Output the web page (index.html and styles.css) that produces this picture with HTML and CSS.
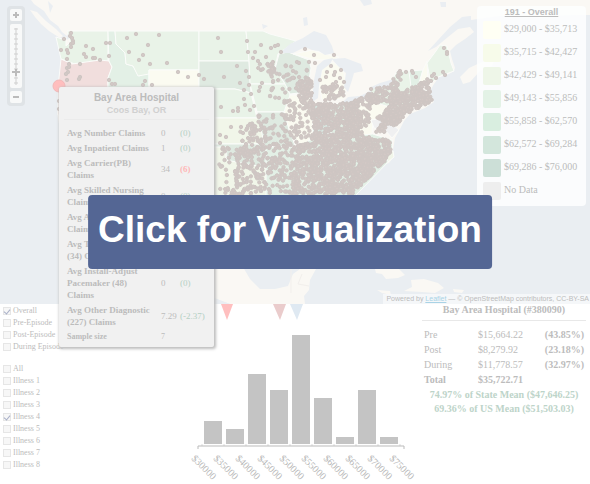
FILE: index.html
```html
<!DOCTYPE html>
<html lang="en">
<head>
<meta charset="utf-8">
<title>Hospital Claims Visualization</title>
<link rel="stylesheet" href="styles.css">
</head>
<body>
<main class="page">
  <section class="map" aria-label="Map">
    <svg class="map-canvas" viewBox="0 0 590 304" preserveAspectRatio="xMinYMin slice" aria-hidden="true">
      <rect class="sea" width="590" height="304"/>
      <path class="land" d="M31 0 34 4 44 11 50 20 58 26 62 32 67 36 68 31 71 38 66 40 55 37 60 42 61 60 59 87 57 113 62 140 75 200 100 230 140 290 200 304 214 298 230 304 590 304 590 0Z"/>
      <path class="land" d="M30 10 37 12 46 21 56 29 63 36 60 38 49 31 41 24 35 17Z"/>
      <path class="sea" d="M590 15 470 16 462 17 450 27 438 40 428 51 436 47 448 37 458 29 470 27 474 32 465 39 456 45 450 51 452 59 455 68 454 71 447 75 439 77 434 84 430 91 430 98 434 102 425 108 410 114 404 121 400 129 395 138 393 150 394 156 389 163 378 167 370 176 362 186 355 197 340 215 345 260 330 250 320 225 290 222 250 230 240 262 250 279 260 289 275 289 288 286 293 274 300 269 316 269 310 280 309 290 304 296 305 304 590 304Z"/>
      <path class="land" d="M460 77 469 68 482 62 496 57 492 66 480 71 470 82 463 84ZM471 20 500 16 540 18 590 12 590 0 471 0ZM375 269 398 268 405 275 398 278 386 279 382 274 376 273ZM411 280 424 279 438 283 444 288 435 293 422 292 404 291 412 287ZM377 290 390 291 391 295 382 293ZM453 289 464 290 462 293 454 292Z"/>
      <path class="sea" d="M48 1 50 13 53 6ZM303 18 307 17 308 25 304 26ZM360 0 371 0 372 4 364 6ZM440 2 446 2 446 7 441 7ZM262 24 268 26 263 29Z"/>
      <path class="sea" d="M214 298 230 304 214 304Z"/>

      <g class="states">
        <path class="tone-3" d="M56 37 62 39 66 37 66 46 70 42 67 31 108 31 108 61 85 63 75 64 61 59Z"/>
        <path class="oregon" d="M61 59 72 64 100 60 109 61 112 67 108 78 108 115 58 115 58 87Z"/>
        <path class="tone-4" d="M108 31 115 31 116 44 125 53 126 64 133 66 139 76 149 72 149 115 108 115 108 78 112 67 109 61Z"/>
        <path class="tone-3" d="M115 31 199 31 199 70 149 70 149 74 138 76 133 66 126 64 125 53 116 44Z"/>
        <path class="tone-1" d="M149 70 199 70 199 110 149 110Z"/>
        <path class="tone-3" d="M199 31 246 31 249 61 199 61Z"/>
        <path class="tone-6" d="M199 61 249 61 251 93 235 89 199 89Z"/>
        <path class="tone-3" d="M199 89 235 89 251 93 257 118 199 118Z"/>
        <path class="tone-2" d="M199 118 260 118 266 144 199 144Z"/>
        <path class="tone-6" d="M211 144 268 144 268 168 250 168 226 160 226 148 211 148Z"/>
        <path class="tone-2" d="M211 147 226 147 226 160 268 168 270 200 211 200Z"/>
        <path class="tone-3" d="M246 31 263 31 270 34 296 41 278 54 275 68 285 84 250 84 249 60Z"/>
        <path class="tone-3" d="M250 84 286 84 291 98 285 112 257 112Z"/>
        <path class="tone-6" d="M279 54 288 52 309 60 311 68 307 92 290 94 284 82 275 69Z"/>
        <path class="tone-6" d="M257 112 284 112 295 146 265 147Z"/>
        <path class="tone-1" d="M290 95 309 95 313 106 313 135 303 147 290 133 284 112Z"/>
        <path class="tone-1" d="M293 54 312 50 325 54 339 57 334 60 316 60 304 57ZM323 66 333 62 343 69 347 86 344 99 322 100 319 84Z"/>
        <path class="tone-5" d="M313 105 330 103 330 133 313 140Z"/>
        <path class="tone-4" d="M330 104 360 102 360 135 330 133Z"/>
        <path class="tone-4" d="M266 147 300 147 313 138 360 130 392 140 393 157 355 196 266 200Z"/>
        <path class="tone-1" d="M359 103 382 94 396 112 373 121 372 134 353 136Z"/>
        <path class="tone-3" d="M370 89 390 83 397 71 420 71 424 98 400 110 373 102Z"/>
        <path class="tone-4" d="M409 71 423 70 418 86 411 87Z"/>
        <path class="tone-1" d="M423 70 427 61 428 84 418 88Z"/>
        <path class="tone-3" d="M427 63 436 51 440 45 447 46 451 63 454 71 438 77 431 84Z"/>
        <path class="nodata" d="M371 120 385 118 399 130 392 138 385 130 374 128Z"/>
        <path class="tone-2" d="M386 152 393 151 394 157 388 162Z"/>
      </g>
      <g class="lakes">
        <path d="M280 53 290 44 303 38 314 31 326 35 332 46 334 53 325 55 319 51 312 50 305 47 293 53 286 53Z"/>
        <path d="M312 102 314 80 317 66 324 60 333 58 330 64 322 70 319 86 318 98Z"/>
        <path d="M332 59 345 58 361 64 363 71 354 73 352 80 348 92 344 87 346 73 338 66Z"/>
        <path d="M342 103 348 97 360 96 372 90 368 97 352 104ZM369 88 380 83 394 79 391 85 378 89Z"/>
      </g>
      <g class="border"><path d="M291 269 291 293M302 274 298 284 309 286"/></g>
      <g id="hospitals" class="hospitals"></g>
      <circle class="selected" cx="59" cy="86" r="6"/>
    </svg>

    <div class="zoom-control">
      <button class="zoom-button" type="button" aria-label="Zoom in"><svg viewBox="0 0 12 12" aria-hidden="true"><path d="M6 3v6M3 6h6"/></svg></button>
      <svg class="zoom-scale" viewBox="0 0 12 64" aria-hidden="true">
        <path class="ticks" d="M6 4v57M4 5h4M4 10h4M4 15h4M4 20h4M4 25h4M4 30h4M4 35h4M4 40h4M4 45h4M4 54h4M4 59h4"/>
        <path class="knob" d="M2 48h8M6 45v7"/>
      </svg>
      <button class="zoom-button" type="button" aria-label="Zoom out"><svg viewBox="0 0 12 12" aria-hidden="true"><path d="M3 6h6"/></svg></button>
    </div>

    <aside class="legend">
      <h2 class="legend-title">191 - Overall</h2>
      <ul class="legend-list">
        <li><span class="swatch swatch-1"></span>$29,000 - $35,713</li>
        <li><span class="swatch swatch-2"></span>$35,715 - $42,427</li>
        <li><span class="swatch swatch-3"></span>$42,429 - $49,141</li>
        <li><span class="swatch swatch-4"></span>$49,143 - $55,856</li>
        <li><span class="swatch swatch-5"></span>$55,858 - $62,570</li>
        <li><span class="swatch swatch-6"></span>$62,572 - $69,284</li>
        <li><span class="swatch swatch-7"></span>$69,286 - $76,000</li>
        <li><span class="swatch swatch-none"></span>No Data</li>
      </ul>
    </aside>
    <p class="attribution">Powered by <a href="#leaflet">Leaflet</a> — © OpenStreetMap contributors, CC-BY-SA</p>
  </section>

  <section class="details">
    <form class="filters">
      <fieldset>
        <label><input type="checkbox" checked>Overall</label>
        <label><input type="checkbox">Pre-Episode</label>
        <label><input type="checkbox">Post-Episode</label>
        <label><input type="checkbox">During Episode</label>
      </fieldset>
      <fieldset>
        <label><input type="checkbox">All</label>
        <label><input type="checkbox">Illness 1</label>
        <label><input type="checkbox">Illness 2</label>
        <label><input type="checkbox">Illness 3</label>
        <label><input type="checkbox" checked>Illness 4</label>
        <label><input type="checkbox">Illness 5</label>
        <label><input type="checkbox">Illness 6</label>
        <label><input type="checkbox">Illness 7</label>
        <label><input type="checkbox">Illness 8</label>
      </fieldset>
    </form>

    <svg class="chart" viewBox="0 0 232 180" role="img" aria-label="Cost distribution">
      <path class="marker-hospital" d="M31 0h12l-6 16z"/>
      <path class="marker-state" d="M83 0h13l-6 16z"/>
      <path class="marker-us" d="M100 0h13l-6 16z"/>
      <g class="bars">
        <rect x="14" y="117" width="18" height="23"/>
        <rect x="36" y="125" width="18" height="15"/>
        <rect x="58" y="70" width="18" height="70"/>
        <rect x="80" y="86" width="18" height="54"/>
        <rect x="102" y="31" width="18" height="109"/>
        <rect x="124" y="94" width="18" height="46"/>
        <rect x="146" y="133" width="18" height="7"/>
        <rect x="168" y="86" width="18" height="54"/>
        <rect x="190" y="133" width="18" height="7"/>
      </g>
      <path class="minor-ticks" d="M12 140v2M34 140v2M56 140v2M78 140v2M100 140v2M122 140v2M144 140v2M166 140v2M188 140v2M210 140v2"/>
      <path class="axis" d="M8 145v-3h206v3"/>
      <g class="axis-labels">
        <text transform="translate(1 155) rotate(45)">$30000</text>
        <text transform="translate(23 155) rotate(45)">$35000</text>
        <text transform="translate(45 155) rotate(45)">$40000</text>
        <text transform="translate(67 155) rotate(45)">$45000</text>
        <text transform="translate(89 155) rotate(45)">$50000</text>
        <text transform="translate(111 155) rotate(45)">$55000</text>
        <text transform="translate(133 155) rotate(45)">$60000</text>
        <text transform="translate(155 155) rotate(45)">$65000</text>
        <text transform="translate(177 155) rotate(45)">$70000</text>
        <text transform="translate(199 155) rotate(45)">$75000</text>
      </g>
    </svg>

    <section class="summary">
      <h2>Bay Area Hospital (#380090)</h2>
      <table>
        <tr><th scope="row">Pre</th><td>$15,664.22</td><td class="share">(43.85%)</td></tr>
        <tr><th scope="row">Post</th><td>$8,279.92</td><td class="share">(23.18%)</td></tr>
        <tr><th scope="row">During</th><td>$11,778.57</td><td class="share">(32.97%)</td></tr>
        <tr class="total"><th scope="row">Total</th><td>$35,722.71</td><td></td></tr>
      </table>
      <p>74.97% of State Mean ($47,646.25)</p>
      <p>69.36% of US Mean ($51,503.03)</p>
    </section>
  </section>

  <aside class="popup">
    <header>
      <h2>Bay Area Hospital</h2>
      <p>Coos Bay, OR</p>
    </header>
    <table>
      <tr><th scope="row">Avg Number Claims</th><td>0</td><td class="good">(0)</td></tr>
      <tr><th scope="row">Avg Inpatient Claims</th><td>1</td><td class="good">(0)</td></tr>
      <tr><th scope="row">Avg Carrier(PB) Claims</th><td>34</td><td class="bad">(6)</td></tr>
      <tr><th scope="row">Avg Skilled Nursing Claims</th><td>0</td><td class="good">(0)</td></tr>
      <tr><th scope="row">Avg A<br>Claims</th><td></td><td></td></tr>
      <tr><th scope="row">Avg T<br>(34) Claims</th><td></td><td></td></tr>
      <tr><th scope="row">Avg Install-Adjust Pacemaker (48)<br>Claims</th><td>0</td><td class="good">(0)</td></tr>
      <tr><th scope="row">Avg Other Diagnostic (227) Claims</th><td>7.29</td><td class="good">(-2.37)</td></tr>
      <tr class="sample"><th scope="row">Sample size</th><td>7</td><td></td></tr>
    </table>
  </aside>

  <button class="launch" type="button">Click for Visualization</button>
</main>
<script src="map.js"></script>
</body>
</html>
```
FILE: styles.css
```css
* { box-sizing: border-box; }

body {
  margin: 0;
  background: #fff;
  color: #bcbcbc;
  font-family: "Liberation Serif", "Times New Roman", serif;
  font-size: 10px;
  line-height: 12px;
}

h2, p, ul, fieldset { margin: 0; padding: 0; border: 0; }
h2 { font-size: inherit; }

.page { position: relative; min-height: 100vh; overflow: hidden; }

/* Map */
.map { position: relative; height: 304px; overflow: hidden; background: #ebeff2; }
.map-canvas { display: block; width: 100%; height: 100%; }
.sea, .lakes path { fill: #eaeef2; }
.land { fill: #faf8f4; }
.states path { stroke: #fbfcfa; stroke-width: 1; }
.states .tone-1 { fill: #fbfbf1; }
.states .tone-2 { fill: #f1f6e9; }
.states .tone-3 { fill: #e9f3e8; }
.states .tone-4 { fill: #e3f0e6; }
.states .tone-5 { fill: #d9e8e2; }
.states .tone-6 { fill: #dfeae1; }
.states .nodata { fill: #f0f0f1; }
.states .oregon { fill: #f1dedd; }
.border path { fill: none; stroke: #f2efec; }
.hospitals circle { fill: #d2c8c5; stroke: #cec6c3; stroke-width: 1; }
.selected { fill: #ffbebe; stroke: #f2b8b8; }

.zoom-control {
  position: absolute;
  top: 6px;
  left: 7px;
  display: flex;
  flex-direction: column;
  gap: 3px;
  padding: 3px;
  border-radius: 4px;
  background: #dfe3e6;
}
.zoom-button {
  width: 12px;
  height: 12px;
  padding: 0;
  border: 0;
  border-radius: 2px;
  background: #f8f9f9;
}
.zoom-button svg { display: block; fill: none; stroke: #bbb; stroke-width: 2; }
.zoom-scale { width: 12px; height: 64px; border-radius: 2px; background: #f8f9f9; fill: none; }
.ticks { stroke: #cfcfcf; }
.knob { stroke: #bcbcbc; stroke-width: 2; }

.legend {
  position: absolute;
  top: 6px;
  right: 4px;
  width: 109px;
  height: 200px;
  padding: 0 6px;
  border-radius: 4px;
  background: rgba(253, 254, 254, 0.88);
}
.legend-title {
  text-align: center;
  text-decoration: underline;
  font: bold 9px/12px "Liberation Sans", Arial, sans-serif;
}
.legend-list { display: grid; gap: 5px; padding-top: 3px; list-style: none; }
.legend-list li { display: flex; gap: 3px; height: 18px; line-height: 16px; }
.swatch { width: 18px; height: 18px; border-radius: 2px; }
.swatch-1 { background: #fffff4; }
.swatch-2 { background: #f7fbea; }
.swatch-3 { background: #eef6e8; }
.swatch-4 { background: #e3f2e6; }
.swatch-5 { background: #d9eee0; }
.swatch-6 { background: #d3e6dc; }
.swatch-7 { background: #ccdfd7; }
.swatch-none { background: #eeeeee; }

.attribution {
  position: absolute;
  right: 0;
  bottom: 0;
  padding: 0 1px 0 3px;
  background: rgba(250, 251, 252, 0.7);
  font: 7px/10px "Liberation Sans", Arial, sans-serif;
  white-space: nowrap;
}
.attribution a { color: #a9d3e6; }

/* Details below the map */
.details { display: grid; grid-template-columns: 190px minmax(0, 1fr) 168px; }

.filters { display: grid; align-content: start; gap: 10px; padding: 1px 0 0 3px; font-size: 8px; }
.filters label { display: flex; align-items: center; gap: 2px; height: 12px; }
.filters input {
  display: block;
  width: 8px;
  height: 8px;
  margin: 0;
  appearance: none;
  border: 1px solid #e6e6e6;
  background: #f7f7f7;
}
.filters input:checked::after {
  content: "";
  display: block;
  width: 3px;
  height: 5px;
  margin: 0 auto;
  border: solid #a9b0c8;
  border-width: 0 1px 1px 0;
  transform: rotate(40deg);
}

.chart { display: block; width: 100%; }
.marker-hospital { fill: #ffbfbf; }
.marker-state { fill: #eacccc; }
.marker-us { fill: #dfe9f2; }
.bars rect { fill: #c4c4c4; }
.minor-ticks { stroke: #ddd; }
.axis { fill: none; stroke: #bbb; }
.axis-labels { fill: #b8b8b8; font-size: 10px; }

.summary { padding: 0 4px 0 0; text-align: center; font-weight: bold; }
.summary h2 { padding-bottom: 4px; border-bottom: 1px solid #e8e8e8; }
.summary table { width: 100%; margin: 6px 0 1px; border-collapse: collapse; text-align: left; }
.summary th, .summary td { height: 15px; padding: 0 2px; font-weight: normal; }
.summary th { width: 33%; }
.summary .share { text-align: right; }
.summary .share, .summary .total th, .summary .total td { font-weight: bold; }
.summary p { line-height: 14px; color: #bdd4c9; }

/* Hospital popup */
.popup {
  position: absolute;
  top: 87px;
  left: 59px;
  width: 155px;
  padding: 5px 5px 3px;
  border-radius: 2px;
  background: #f1f1f1;
  box-shadow: 1px 1px 3px 1px #bdbdbd;
}
.popup header {
  padding-bottom: 3px;
  border-bottom: 1px solid #ebebeb;
  text-align: center;
  font: bold 9px/12px "Liberation Sans", Arial, sans-serif;
}
.popup h2 { font-size: 10px; }
.popup header p { color: #d0d0d0; }
.popup table { width: 100%; margin-top: 5px; border-collapse: collapse; table-layout: fixed; text-align: left; }
.popup th { width: 95px; padding: 2px 0 1px 3px; font-size: 9px; }
.popup td { padding: 2px 0 1px 2px; font-size: 9px; white-space: nowrap; }
.popup td:nth-child(2) { width: 19px; }
.popup .good { color: #b5d0c4; }
.popup .bad { color: #ffb8b8; font-weight: bold; }
.popup .sample th, .popup .sample td { font-size: 8px; }

/* Call to action */
.launch {
  position: absolute;
  top: 195px;
  left: 50%;
  transform: translateX(-50%);
  margin-left: -5px;
  padding: 14px 10px 18px;
  border: 0;
  border-radius: 4px;
  background: #546694;
  color: #fff;
  font: bold 37px/42px "Liberation Sans", Arial, sans-serif;
  white-space: nowrap;
}
```
FILE: map.js
```js
// Individually placed hospitals in the sparse western and northern states.
const sites = [
  [71,33],[64,39],[70,36],[72,38],[73,41],[71,44],[73,43],[71,47],[67,50],[61,50],[68,53],[86,46],[93,49],
  [84,54],[86,57],[93,58],[95,58],[100,60],[106,43],[110,43],[109,56],[67,59],[80,64],[69,64],[67,68],[68,72],
  [66,74],[69,67],[67,80],[80,77],[79,79],[109,80],[112,84],[115,84],[127,38],[136,34],[159,35],[148,45],[129,52],
  [143,55],[139,60],[150,64],[167,63],[178,72],[188,77],[145,81],[143,85],[152,85],[199,75],[204,79],[218,38],
  [221,52],[224,77],[237,66],[247,41],[261,45],[271,48],[275,46],[278,45],[248,52],[255,52],[281,52],[253,58],
  [258,61],[266,57],[246,71],[249,77],[240,83],[249,85],[244,90],[251,94],[261,70],[305,49],[314,55],[334,55],
  [309,62],[315,63],[297,62],[299,63],[221,107],[233,111],[238,108],[238,111],[244,99],[245,105],[250,110],
  [254,106],[231,127],[226,137],[220,135],[220,143],[241,127],[243,133],[248,126],[250,124],[444,48],[447,52],
  [447,54],[443,72],[445,75],[436,78],[59,101],[59,109],[58,88],[331,66],[327,72],[341,70],[334,75],[320,80],
  [340,78],[344,82],[336,82],[335,72],[326,77],[262,83],[260,87],[273,82],[270,96],[279,98],[273,88],
  [412,71],[413,73],[416,77],[421,83],[406,72],[400,71],[434,74],[432,76],[431,81],[428,83],[417,88]
];

// Regions with a number of hospitals scattered inside each outline.
const regions = [
  [20, [[266,64],[276,64],[278,74],[268,75]]],
  [20, [[256,62],[285,62],[292,90],[256,110]]],
  [22, [[283,60],[307,68],[310,84],[290,92]]],
  [70, [[297,82],[311,76],[313,104],[300,104]]],
  [36, [[322,84],[343,84],[346,100],[322,102]]],
  [68, [[284,100],[312,102],[312,138],[284,140]]],
  [36, [[256,114],[286,114],[288,145],[262,145]]],
  [60, [[240,130],[265,114],[266,148],[242,160]]],
  [40, [[219,148],[240,145],[240,196],[220,196]]],
  [130, [[236,148],[268,146],[268,194],[232,194]]],
  [105, [[268,144],[300,140],[298,194],[268,194]]],
  [340, [[296,146],[332,136],[334,194],[292,194]]],
  [300, [[312,104],[358,102],[358,136],[312,142]]],
  [420, [[330,136],[362,132],[372,174],[352,194],[330,194]]],
  [230, [[360,136],[390,140],[391,154],[370,177],[358,172]]],
  [110, [[348,104],[372,92],[370,124],[350,134]]],
  [90, [[370,88],[398,86],[400,102],[370,104]]],
  [250, [[396,96],[429,78],[432,101],[408,113],[394,124],[384,113]]],
  [80, [[376,118],[386,112],[406,110],[396,128]]],
  [14, [[376,122],[386,122],[386,132],[376,132]]],
  [14, [[392,75],[402,70],[401,86],[390,88]]]
];

let seed = 191;
function random() {
  seed = (seed * 1664525 + 1013904223) % 4294967296;
  return seed / 4294967296;
}

function contains(outline, x, y) {
  let inside = false;
  outline.forEach(([ax, ay], i) => {
    const [bx, by] = outline[(i + outline.length - 1) % outline.length];
    if ((ay > y) !== (by > y) && x < (bx - ax) * (y - ay) / (by - ay) + ax) inside = !inside;
  });
  return inside;
}

for (const [count, outline] of regions) {
  const xs = outline.map(p => p[0]);
  const ys = outline.map(p => p[1]);
  const left = Math.min(...xs), top = Math.min(...ys);
  const width = Math.max(...xs) - left, height = Math.max(...ys) - top;
  let placed = 0;
  while (placed < count) {
    const x = left + random() * width;
    const y = top + random() * height;
    if (contains(outline, x, y)) {
      sites.push([x, y]);
      placed += 1;
    }
  }
}

const layer = document.getElementById("hospitals");
for (const [x, y] of sites) {
  const dot = document.createElementNS("http://www.w3.org/2000/svg", "circle");
  dot.setAttribute("cx", x);
  dot.setAttribute("cy", y);
  dot.setAttribute("r", 1.7);
  layer.append(dot);
}
```
